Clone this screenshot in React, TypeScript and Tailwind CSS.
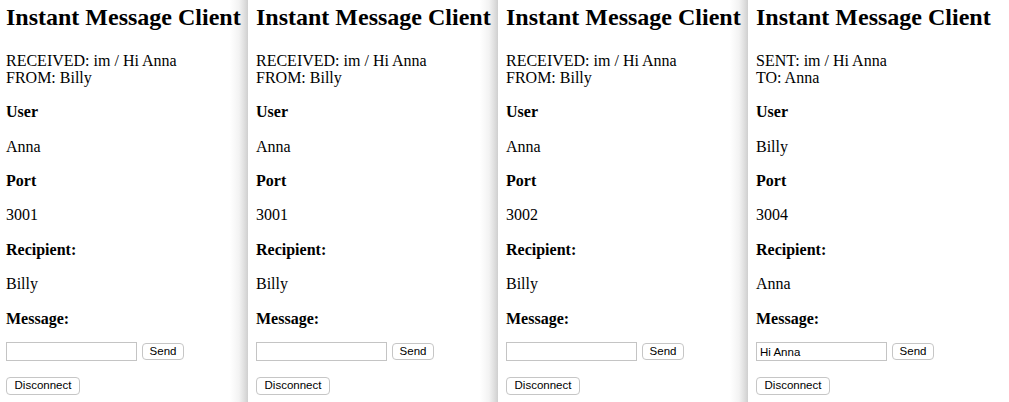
const clients = [
  { status: 'RECEIVED: im / Hi Anna', from: 'FROM: Billy', user: 'Anna', port: '3001', recipient: 'Billy', message: '' },
  { status: 'RECEIVED: im / Hi Anna', from: 'FROM: Billy', user: 'Anna', port: '3001', recipient: 'Billy', message: '' },
  { status: 'RECEIVED: im / Hi Anna', from: 'FROM: Billy', user: 'Anna', port: '3002', recipient: 'Billy', message: '' },
  { status: 'SENT: im / Hi Anna', from: 'TO: Anna', user: 'Billy', port: '3004', recipient: 'Anna', message: 'Hi Anna' },
];

const Client = ({ c, index }) => {
  const first = index === 0;
  const last = index === clients.length - 1;

  return (
    <div
      className={
        (first ? 'w-[248px] pl-[6px] ' : last ? 'flex-1 pl-[8px] ' : 'w-[250px] pl-[8px] ') +
        (last
          ? 'bg-white'
          : 'bg-[linear-gradient(to_right,#ffffff_calc(100%-18px),#f3f3f3_calc(100%-9px),#dcdcdc_calc(100%-3px),#cfcfcf)]')
      }
    >
      <h2 className="text-[24px] font-bold leading-[27.6px] mt-[4px] mb-[20px] whitespace-nowrap">
        Instant Message Client
      </h2>
      <div className="leading-[17.8px]">
        <div>{c.status}</div>
        <div>{c.from}</div>
      </div>
      <p className="my-4 leading-[18.4px] font-bold">User</p>
      <p className="my-4 leading-[18.4px]">{c.user}</p>
      <p className="my-4 leading-[18.4px] font-bold">Port</p>
      <p className="my-4 leading-[18.4px]">{c.port}</p>
      <p className="my-4 leading-[18.4px] font-bold">Recipient:</p>
      <p className="my-4 leading-[18.4px]">{c.recipient}</p>
      <p className="mt-4 leading-[18.4px] font-bold">Message:</p>
      <div className="mt-[14px] h-[19px] flex items-center gap-[5px] font-['Liberation_Sans',Arial,sans-serif] text-[11.5px]">
        <input
          readOnly
          value={c.message}
          className="w-[131px] h-[19px] border border-[#c4c4c4] px-[3px] text-[11.5px] text-black outline-none"
        />
        <button className="h-[17px] w-[42px] border border-[#c6c6c6] rounded-[4px] bg-white leading-none">
          Send
        </button>
      </div>
      <div className="mt-[16px] pb-[7px] font-['Liberation_Sans',Arial,sans-serif] text-[11.5px]">
        <button className="h-[18px] w-[74px] border border-[#c6c6c6] rounded-[4px] bg-white leading-none">
          Disconnect
        </button>
      </div>
    </div>
  );
};

const App = () => {
  return (
    <div className="flex w-[1009px] h-[402px] overflow-hidden bg-white text-black text-[16px] font-['Liberation_Serif','Times_New_Roman',serif]">
      {clients.map((c, i) => (
        <Client key={i} c={c} index={i} />
      ))}
    </div>
  );
};

export default App;
